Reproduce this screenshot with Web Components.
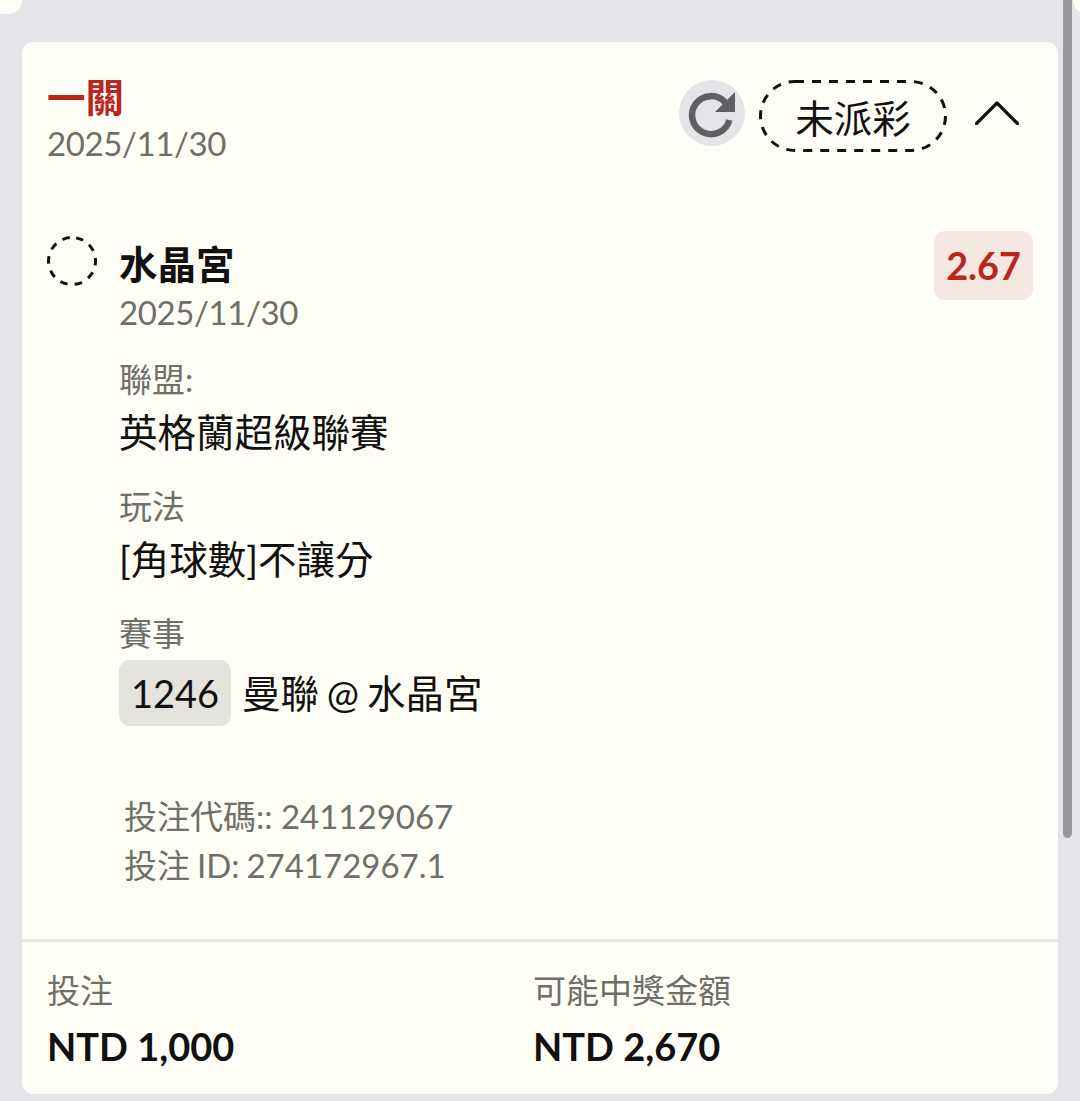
<!DOCTYPE html>
<html lang="zh-Hant">
<head>
<meta charset="utf-8">
<title>投注</title>
<style>
  html, body { margin: 0; height: 1101px; overflow: hidden; background: #e3e5e8; }
  body { font-family: Lato, "Noto Sans CJK TC", sans-serif; color: #111; }
</style>
</head>
<body>
<app-shell>
  <bet-card>
    <bet-header slot="header" title="一關" date="2025/11/30" status="未派彩"></bet-header>
    <bet-leg team="水晶宮" date="2025/11/30" odds="2.67">
      <leg-field label="聯盟:" style="--pad:21px">英格蘭超級聯賽</leg-field>
      <leg-field label="玩法" style="--pad:27px">[角球數]不讓分</leg-field>
      <leg-field label="賽事" style="--pad:27px" match="1246">曼聯 @ 水晶宮</leg-field>
    </bet-leg>
    <bet-codes code="241129067" bet-id="274172967.1"></bet-codes>
    <bet-summary slot="footer" stake="NTD 1,000" payout="NTD 2,670"></bet-summary>
  </bet-card>
</app-shell>

<script>
class AppShell extends HTMLElement {
  constructor(){
    super()
    this.attachShadow({mode:'open'}).innerHTML = `
      <style>
        :host{ display:block; position:relative; height:1101px; padding:42px 22px 7px; box-sizing:border-box }
        .blob{ position:absolute; top:-20px; width:42px; height:34px; border-radius:14px; background:#fffef6 }
        .left{ left:-20px }
        .right{ left:1073px }
        .thumb{ position:absolute; left:1063px; top:0; width:9px; height:838px; background:#98989c; border-radius:0 0 5px 5px }
      </style>
      <div class="blob left"></div>
      <div class="blob right"></div>
      <slot></slot>
      <div class="thumb"></div>`
  }
}

class BetCard extends HTMLElement {
  constructor(){
    super()
    this.attachShadow({mode:'open'}).innerHTML = `
      <style>
        :host{ display:block; background:#fffef6; border-radius:11px; height:1052px; overflow:hidden }
        .body{ padding:0 25px 0 25px }
        .foot{ border-top:3px solid #e8e7e1; margin-top:49px }
      </style>
      <div class="body">
        <slot name="header"></slot>
        <slot></slot>
      </div>
      <div class="foot"><slot name="footer"></slot></div>`
  }
}

class StatusPill extends HTMLElement {
  constructor(){
    super()
    this.attachShadow({mode:'open'}).innerHTML = `
      <style>
        :host{ display:flex; position:relative; width:188px; height:72px; align-items:center; justify-content:center;
               font-size:38.5px; color:#111 }
        svg{ position:absolute; inset:0; width:188px; height:72px }
      </style>
      <svg viewBox="0 0 188 72">
        <rect x="1.500" y="1.500" width="185" height="69" rx="34.500" fill="none" stroke="#111" stroke-width="3" stroke-dasharray="9 8"/>
      </svg>
      <slot></slot>`
  }
}

class BetHeader extends HTMLElement {
  constructor(){
    super()
    this.attachShadow({mode:'open'}).innerHTML = `
      <style>
        :host{ display:flex; justify-content:space-between; align-items:flex-start; padding-top:32px }
        .title{ font-size:38.5px; line-height:46px; font-weight:700; color:#b9261e }
        .date{ font-size:33px; line-height:47px; letter-spacing:-.4px; color:#6f6f6a }
        .actions{ display:flex; align-items:flex-start; gap:14px; margin:6px 14px 0 0 }
        .refresh{ width:66px; height:66px; border-radius:50%; background:#e3e5e8; display:block }
        .chev{ display:block; width:44px; height:24px; margin:21px 0 0 14px }
      </style>
      <div>
        <div class="title"></div>
        <div class="date"></div>
      </div>
      <div class="actions">
        <svg class="refresh" viewBox="0 0 66 66">
          <path d="M50.400 40A19 19 0 1 1 46.500 22.800" fill="none" stroke="#5f6062" stroke-width="6.500"/>
          <path d="M56 12v20H36z" fill="#5f6062"/>
        </svg>
        <status-pill></status-pill>
        <svg class="chev" viewBox="0 0 44 24">
          <path d="M1.500 22.500 22 2l20.500 20.500" fill="none" stroke="#111" stroke-width="3.200" stroke-linecap="round" stroke-linejoin="round"/>
        </svg>
      </div>`
    const root = this.shadowRoot
    root.querySelector('.title').textContent = this.getAttribute('title')
    root.querySelector('.date').textContent = this.getAttribute('date')
    root.querySelector('status-pill').textContent = this.getAttribute('status')
  }
}

class BetLeg extends HTMLElement {
  constructor(){
    super()
    this.attachShadow({mode:'open'}).innerHTML = `
      <style>
        :host{ display:grid; grid-template-columns:73px 1fr auto; margin-top:64px }
        .dot{ display:block; width:50px; height:50px; margin-top:5px }
        .team{ font-size:38.5px; line-height:48px; font-weight:700; margin-top:9px; margin-left:-1px }
        .date{ font-size:33px; line-height:48px; letter-spacing:-.4px; color:#6f6f6a; margin-left:-1px }
        .odds{ width:99px; height:69px; border-radius:11px; background:#f5e8e1; color:#b9261e;
               display:flex; align-items:center; justify-content:center; font-size:37.8px; font-weight:700 }
      </style>
      <svg class="dot" viewBox="0 0 50 50">
        <circle cx="25" cy="25" r="23.500" fill="none" stroke="#111" stroke-width="3" stroke-dasharray="7.500 7.260" transform="rotate(-80 25 25)"/>
      </svg>
      <div>
        <div class="team"></div>
        <div class="date"></div>
        <slot></slot>
      </div>
      <div class="odds"></div>`
    const root = this.shadowRoot
    root.querySelector('.team').textContent = this.getAttribute('team')
    root.querySelector('.date').textContent = this.getAttribute('date')
    root.querySelector('.odds').textContent = this.getAttribute('odds')
  }
}

class LegField extends HTMLElement {
  constructor(){
    super()
    this.attachShadow({mode:'open'}).innerHTML = `
      <style>
        :host{ display:block; padding-top:var(--pad, 21px); margin-left:-1px }
        .label{ font-size:33px; line-height:44px; color:#6f6f6a }
        .value{ display:flex; align-items:center; font-size:38.5px; line-height:50px; margin-top:6px; word-spacing:-2px }
        .tag{ width:112px; height:66px; margin-right:11px; border-radius:11px; background:#e4e3de; font-size:38px;
              display:flex; align-items:center; justify-content:center }
        .tag[hidden]{ display:none }
      </style>
      <div class="label"></div>
      <div class="value"><span class="tag" hidden></span><slot></slot></div>`
    const root = this.shadowRoot
    root.querySelector('.label').textContent = this.getAttribute('label')
    const match = this.getAttribute('match')
    if(match){
      const tag = root.querySelector('.tag')
      tag.textContent = match
      tag.hidden = false
      root.querySelector('.value').style.marginTop = '5px'
    }
  }
}

class BetCodes extends HTMLElement {
  constructor(){
    super()
    this.attachShadow({mode:'open'}).innerHTML = `
      <style>
        :host{ display:block; margin:66px 0 0 77px; font-size:33px; line-height:49px; color:#6f6f6a }
        .id{ word-spacing:-1.500px }
      </style>
      <div class="code"></div>
      <div class="id"></div>`
    this.shadowRoot.querySelector('.code').textContent = '投注代碼:: ' + this.getAttribute('code')
    this.shadowRoot.querySelector('.id').textContent = '投注 ID: ' + this.getAttribute('bet-id')
  }
}

class BetSummary extends HTMLElement {
  constructor(){
    super()
    this.attachShadow({mode:'open'}).innerHTML = `
      <style>
        :host{ display:grid; grid-template-columns:486px 1fr; padding:26px 25px 0 }
        .label{ font-size:33px; line-height:44px; color:#6f6f6a }
        .amount{ font-size:38px; line-height:50px; font-weight:700; margin-top:9px }
      </style>
      <div>
        <div class="label">投注</div>
        <div class="amount stake"></div>
      </div>
      <div>
        <div class="label">可能中獎金額</div>
        <div class="amount payout"></div>
      </div>`
    this.shadowRoot.querySelector('.stake').textContent = this.getAttribute('stake')
    this.shadowRoot.querySelector('.payout').textContent = this.getAttribute('payout')
  }
}

customElements.define('status-pill', StatusPill)
customElements.define('app-shell', AppShell)
customElements.define('bet-card', BetCard)
customElements.define('bet-header', BetHeader)
customElements.define('bet-leg', BetLeg)
customElements.define('leg-field', LegField)
customElements.define('bet-codes', BetCodes)
customElements.define('bet-summary', BetSummary)
</script>
</body>
</html>
